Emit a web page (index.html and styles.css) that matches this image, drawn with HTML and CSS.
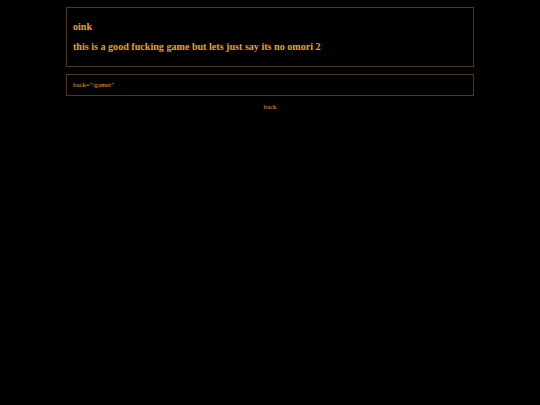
FILE: index.html
```html
<!DOCTYPE html>
<html>
<head>
<meta charset="utf-8">
<link rel="stylesheet" href="styles.css">
</head>
<body>
<div class="page">
  <div class="box post">
    <p class="title">oink</p>
    <p class="body">this is a good fucking game but lets just say its no omori 2</p>
  </div>
  <div class="box meta">
    <p class="back-ref">back="/gamer"</p>
  </div>
  <div class="nav"><span class="back">back</span></div>
</div>
</body>
</html>
```
FILE: styles.css
```css
html, body {
  margin: 0;
  padding: 0;
  background: #000;
}
body {
  font-family: "Liberation Serif", "Times New Roman", serif;
  color: #e8a027;
}
.page {
  padding-top: 7px;
  width: 408px;
  margin: 0 auto;
}
.box {
  border: 1px solid #4d3a1c;
}
.post {
  padding: 12px 6px 12px;
}
.post p {
  margin: 0;
  font-size: 10.1px;
  line-height: 14px;
  font-weight: bold;
}
.post .title {
  margin-bottom: 6px;
}
.meta {
  margin-top: 7px;
  padding: 5px 6px;
}
.meta p {
  margin: 0;
  font-size: 6.8px;
  line-height: 10px;
}
.nav {
  margin-top: 6px;
  text-align: center;
  font-size: 6.8px;
  line-height: 10px;
}
```
